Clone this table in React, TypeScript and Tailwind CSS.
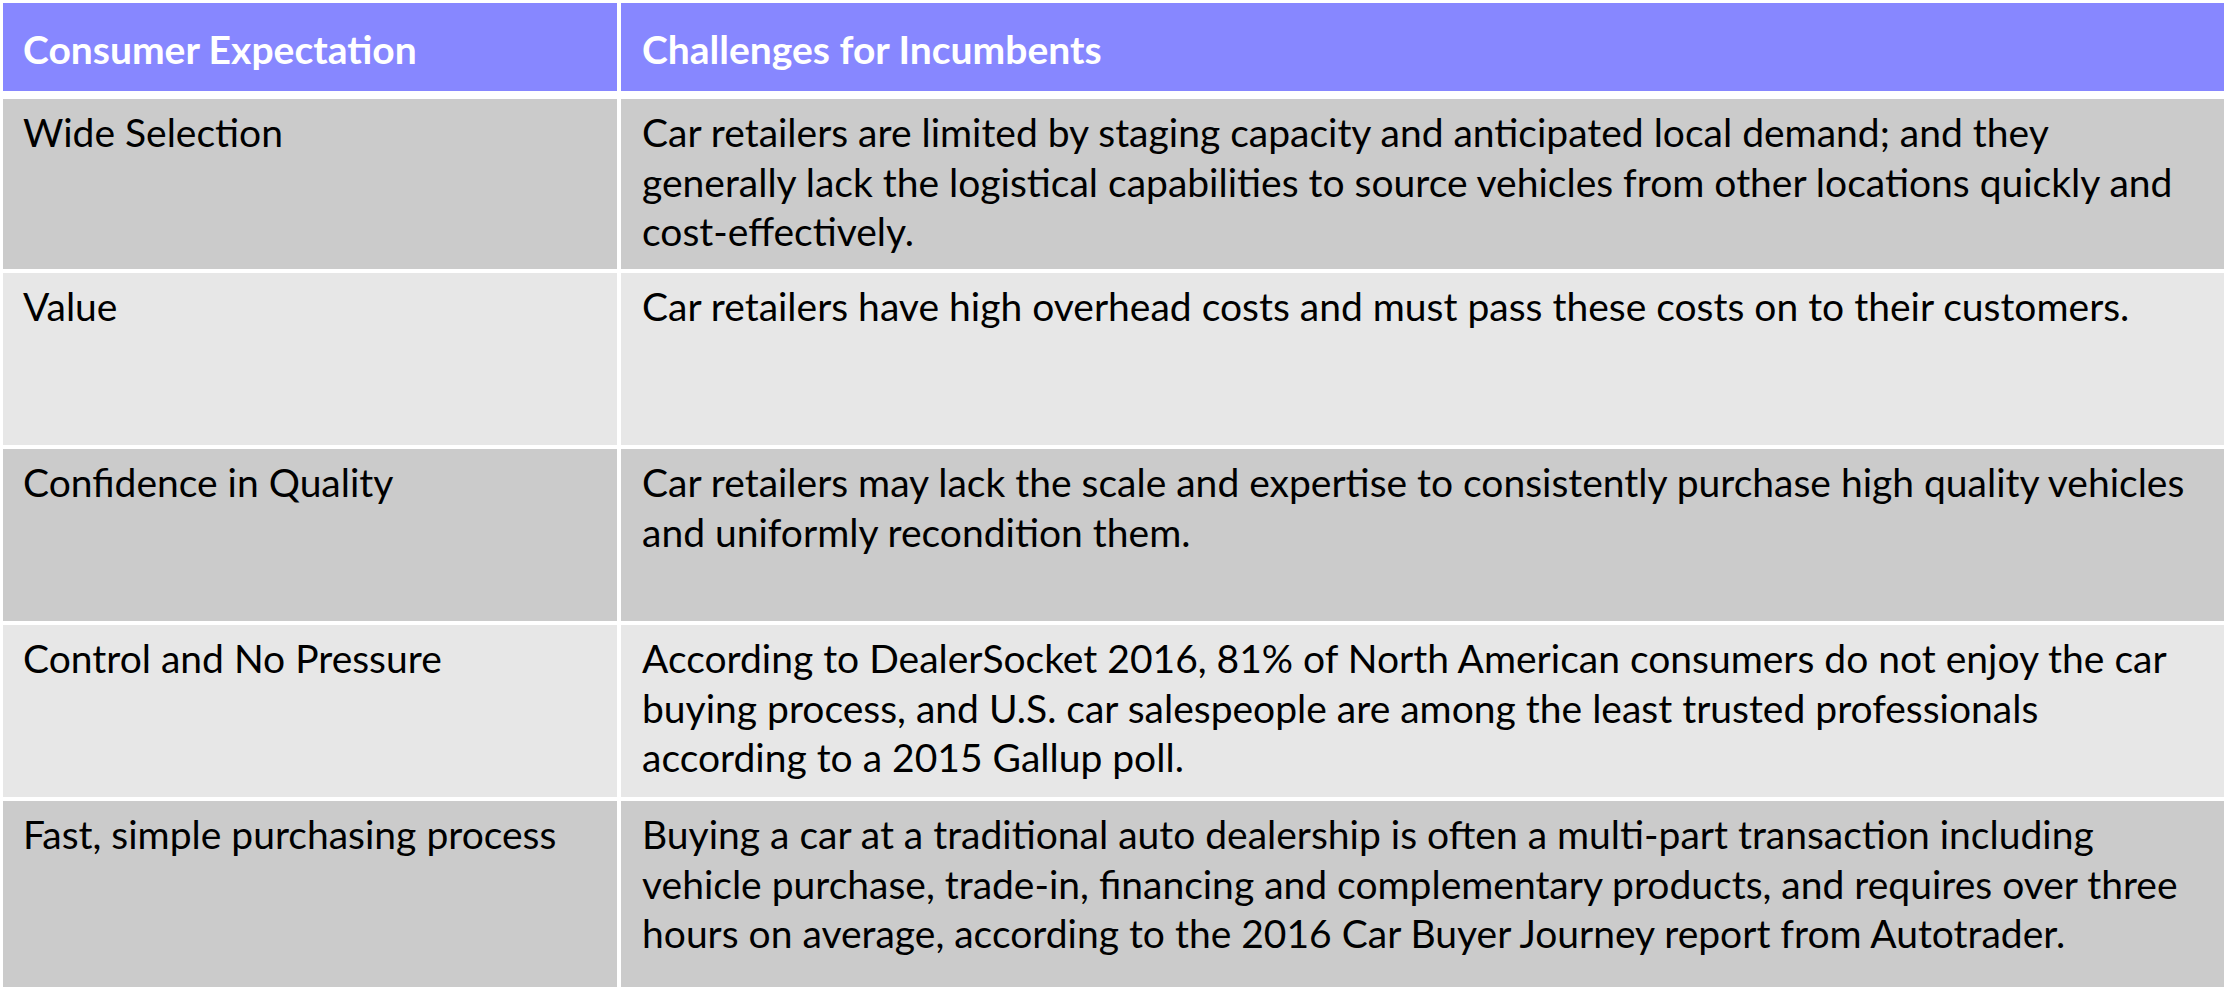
import React from "react";

const rows: { label: string; lines: string[]; h: string; bg: string }[] = [
  {
    label: "Wide Selection",
    lines: [
      "Car retailers are limited by staging capacity and anticipated local demand; and they",
      "generally lack the logistical capabilities to source vehicles from other locations quickly and",
      "cost-effectively.",
    ],
    h: "h-[170px]",
    bg: "bg-[#cbcbcb]",
  },
  {
    label: "Value",
    lines: ["Car retailers have high overhead costs and must pass these costs on to their customers."],
    h: "h-[172px]",
    bg: "bg-[#e7e7e7]",
  },
  {
    label: "Confidence in Quality",
    lines: [
      "Car retailers may lack the scale and expertise to consistently purchase high quality vehicles",
      "and uniformly recondition them.",
    ],
    h: "h-[172px]",
    bg: "bg-[#cbcbcb]",
  },
  {
    label: "Control and No Pressure",
    lines: [
      "According to DealerSocket 2016, 81% of North American consumers do not enjoy the car",
      "buying process, and U.S. car salespeople are among the least trusted professionals",
      "according to a 2015 Gallup poll.",
    ],
    h: "h-[172px]",
    bg: "bg-[#e7e7e7]",
  },
  {
    label: "Fast, simple purchasing process",
    lines: [
      "Buying a car at a traditional auto dealership is often a multi-part transaction including",
      "vehicle purchase, trade-in, financing and complementary products, and requires over three",
      "hours on average, according to the 2016 Car Buyer Journey report from Autotrader.",
    ],
    h: "h-[186px]",
    bg: "bg-[#cbcbcb]",
  },
];

export default function App() {
  return (
    <div className="w-[2232px] h-[994px] bg-white p-[3px] font-['Lato',sans-serif] text-[39px] leading-[49.5px] text-black">
      {/* header */}
      <div className="flex gap-[4px] h-[88px]">
        <div className="w-[614px] bg-[#8787ff] flex items-center pl-[20px] pt-[5px] font-bold text-white">
          Consumer Expectation
        </div>
        <div className="w-[1603px] bg-[#8787ff] flex items-center pl-[21px] pt-[5px] font-bold text-white">
          Challenges for Incumbents
        </div>
      </div>

      {/* body */}
      <div className="mt-[8px] flex flex-col gap-[4px]">
        {rows.map((r) => (
          <div key={r.label} className={`flex gap-[4px] ${r.h}`}>
            <div className={`w-[614px] ${r.bg} pl-[20px] pt-[9px] whitespace-nowrap`}>{r.label}</div>
            <div className={`w-[1603px] ${r.bg} pl-[21px] pt-[9px] whitespace-nowrap`}>
              {r.lines.map((l) => (
                <div key={l}>{l}</div>
              ))}
            </div>
          </div>
        ))}
      </div>
    </div>
  );
}
